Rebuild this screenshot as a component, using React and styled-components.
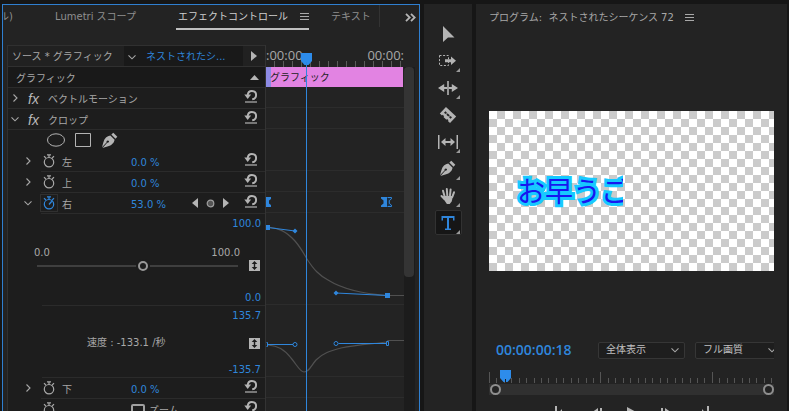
import React, { useState } from 'react';

import styled, { createGlobalStyle } from 'styled-components';

const GlobalStyle = createGlobalStyle`
  * {
    box-sizing: border-box;
  }

  body {
    margin: 0;
    background: #161616;
    color: #a8a8a8;
    font: 10px/14px 'DejaVu Sans', 'Noto Sans CJK JP', sans-serif;
    overflow: hidden;
  }

  button,
  select,
  input {
    margin: 0;
    font: inherit;
    color: inherit;
  }
`;

const Workspace = styled.main`
  display: grid;
  grid-template-columns: minmax(0, 418fr) 48px minmax(0, 311fr);
  gap: 4px;
  height: 100vh;
  padding: 4px 2px 0;
`;

const Panel = styled.section`
  min-width: 0;
  background: #232323;
  overflow: hidden;
`;

const FocusedPanel = styled(Panel)`
  display: flex;
  flex-direction: column;
  border: 1px solid #2f7fd0;
  border-bottom: 0;
`;

const IconButton = styled.button`
  display: flex;
  align-items: center;
  justify-content: center;
  padding: 0;
  border: 0;
  background: none;
  color: ${({ $color }) => $color || '#a8a8a8'};

  svg {
    display: block;
    flex: none;
  }
`;

/* ---- tabs ---- */

const Tabs = styled.nav`
  display: flex;
  flex: none;
  height: 40px;
  padding-right: 3px;
  white-space: nowrap;
`;

const Tab = styled.button`
  display: flex;
  align-items: center;
  flex: none;
  gap: 12px;
  height: 25px;
  padding: 0 0 0 2px;
  margin-right: ${({ $active }) => ($active ? '20px' : '40px')};
  border: 0;
  border-bottom: 2px solid ${({ $active }) => ($active ? '#c0c0c0' : 'transparent')};
  background: none;
  color: ${({ $active }) => ($active ? '#d0d0d0' : '#8f8f8f')};
`;

const ClippedTab = styled(Tab)`
  width: 10px;
  padding: 0;
  justify-content: flex-end;
  overflow: hidden;
`;

const TabDivider = styled.span`
  flex: none;
  width: 1px;
  height: 22px;
  margin-left: -32px;
  background: #333;
`;

const MoreTabs = styled(IconButton)`
  height: 25px;
  margin-left: auto;
`;

/* ---- effect controls ---- */

const EffectBody = styled.div`
  display: grid;
  grid-template-columns: minmax(0, 258fr) minmax(0, 139fr) 15px;
  flex: 1;
  min-height: 0;
  margin-left: 4px;
`;

const Properties = styled.div`
  border: 1px solid #303030;
  border-width: 1px 0 0 1px;
  background: #1d1d1d;
`;

const Row = styled.div`
  display: flex;
  align-items: center;
  height: 21px;
  margin-left: ${({ $indent }) => $indent || '0'};
  border-bottom: 1px solid ${({ $plain }) => ($plain ? 'transparent' : '#2b2b2b')};
  white-space: nowrap;
`;

const SourceRow = styled(Row)`
  background: #212121;
  border-color: #303030;
`;

const SourceName = styled.span`
  flex: 1;
  padding: 2px 0 0 4px;
`;

const SequencePicker = styled.button`
  display: flex;
  align-items: center;
  gap: 9px;
  width: 119px;
  height: 20px;
  padding: 2px 4px 0 3px;
  border: 0;
  background: #191919;
  color: #2f86dc;
`;

const RowEnd = styled(IconButton)`
  flex: none;
  width: ${({ $narrow }) => ($narrow ? '22px' : '28px')};
  height: 20px;
  padding-bottom: ${({ $raised }) => ($raised ? '4px' : '0')};
`;

const GroupRow = styled(Row)`
  padding-left: 8px;
  background: #191919;
`;

const Grow = styled.span`
  flex: 1;
  padding-top: 4px;
`;

const Twirl = styled(IconButton)`
  flex: none;
  width: 14px;
  height: 16px;
`;

const Fx = styled.span`
  flex: none;
  width: 26px;
  padding: 2px 0 0 6px;
  font: italic 14px/18px 'Liberation Sans', sans-serif;
  color: #b8b8b8;
`;

const Masks = styled(Row)`
  gap: 10px;
  padding-left: 39px;
`;

const Param = styled(Row)`
  padding-left: 13px;
  border-image: linear-gradient(90deg, transparent 34px, #2b2b2b 34px) 1;
`;

const Stopwatch = styled(IconButton)`
  flex: none;
  width: 16px;
  height: 16px;
  margin: 0 5px 0 6px;
  outline: ${({ $on }) => ($on ? '1px solid #303030' : 'none')};
`;

const ParamName = styled.span`
  flex: none;
  width: 69px;
  padding-top: 4px;
`;

const Value = styled.span`
  flex: 1;
  padding-top: 4px;
  color: #2f86dc;
`;

const KeyNav = styled.span`
  display: flex;
  align-items: center;
  gap: 8px;
  margin-right: 8px;
`;

const CheckLabel = styled.label`
  display: flex;
  align-items: center;
  flex: 1;
  gap: 4px;
  padding-top: 4px;

  input {
    appearance: none;
    width: 14px;
    height: 14px;
    border: 2px solid #a0a0a0;
    border-radius: 2px;
  }
`;

const GraphSection = styled.div`
  display: flex;
  height: ${({ $height }) => $height};
  margin-left: 34px;
  border-bottom: 1px solid #2b2b2b;
`;

const GraphMain = styled.div`
  flex: 1;
  min-width: 0;
  margin-left: -7px;
  padding: 0 1px 0 2px;
`;

const SliderLabels = styled.div`
  display: flex;
  justify-content: space-between;
  padding-top: 32px;
  margin: 0 -2px 0 -3px;
`;

const Slider = styled.input`
  appearance: none;
  display: block;
  width: 100%;
  height: 12px;
  background: linear-gradient(#3f3f3f, #3f3f3f) center / 100% 2px no-repeat;

  &::-webkit-slider-thumb {
    appearance: none;
    width: 10px;
    height: 10px;
    border: 2px solid #999;
    border-radius: 50%;
    background: #1d1d1d;
    box-shadow: 0 0 0 2px #1d1d1d;
  }
`;

const Speed = styled.p`
  margin: 30px 0 0 50px;
`;

const Bounds = styled.div`
  display: flex;
  flex-direction: column;
  align-items: flex-end;
  justify-content: space-between;
  width: 26px;
  padding: 3px 4px 0 0;
  color: #2f86dc;
  white-space: nowrap;
`;

const Fit = styled(IconButton)`
  margin: ${({ $top }) => $top || '0'} 1px 0 0;
`;

const Timeline = styled.div`
  position: relative;
  border-left: 1px solid #333;
`;

const TimeRuler = styled.div`
  display: flex;
  flex-direction: column;
  height: 22px;
  overflow: hidden;
`;

const TimeLabels = styled.div`
  display: flex;
  justify-content: space-between;
  height: 16px;
  font: 13px/20px 'Open Sans', sans-serif;
`;

const Ticks = styled.div`
  height: 6px;
  margin-left: 8px;
  background: repeating-linear-gradient(90deg, #5a5a5a 0 1px, transparent 1px 9px);
`;

const Clip = styled.div`
  height: 20px;
  padding-left: 4px;
  margin-right: 1px;
  background: linear-gradient(90deg, #8d8ae4 5px, #e283e2 5px);
  color: #222;
  line-height: 22px;
`;

const Lane = styled.div`
  height: ${({ $height }) => $height || '21px'};
  border-bottom: 1px solid ${({ $plain }) => ($plain ? 'transparent' : '#2c2c2c')};

  svg {
    display: block;
  }
`;

const Playhead = styled.div`
  position: absolute;
  top: 8px;
  bottom: 0;
  left: 35px;

  &::after {
    content: '';
    position: absolute;
    top: 9px;
    bottom: 0;
    left: 5px;
    width: 1px;
    background: #2f86dc;
  }

  svg {
    display: block;
  }
`;

const ScrollTrack = styled.div`
  width: 11px;
  margin-top: 22px;
  background: #1c1c1c;

  &::before {
    content: '';
    display: block;
    width: 10px;
    height: 210px;
    border-radius: 4px;
    background: #343434;
  }
`;

/* ---- tools ---- */

const ToolPanel = styled(Panel)`
  display: flex;
  flex-direction: column;
  align-items: center;
  gap: 2px;
  padding-top: 17px;
`;

const Tool = styled(IconButton)`
  position: relative;
  flex: none;
  width: 27px;
  height: 25px;
  border: 1px solid ${({ $active }) => ($active ? '#323232' : 'transparent')};
  border-radius: 2px;
  background: ${({ $active }) => ($active ? '#161616' : 'none')};

  &::after {
    content: '';
    display: ${({ $menu }) => ($menu ? 'block' : 'none')};
    position: absolute;
    right: 1px;
    bottom: 0;
    border: 2px solid #999;
    border-top-color: transparent;
    border-left-color: transparent;
  }
`;

/* ---- program monitor ---- */

const ProgramPanel = styled(Panel)`
  padding: 0 13px;
`;

const ProgramTitle = styled.header`
  display: flex;
  align-items: center;
  gap: 11px;
  height: 28px;
  white-space: pre;
`;

const Preview = styled.div`
  aspect-ratio: 16 / 9;
  margin-top: 79px;
  background: repeating-conic-gradient(#cbcbcb 0 25%, #fff 0 50%) 0 0 / 16px 16px;
`;

const CroppedTitle = styled.div`
  width: 47%;
  height: 100%;
  padding: 59px 0 0 28px;
  overflow: hidden;
  white-space: nowrap;
  font: 28px/40px 'Noto Sans CJK JP', sans-serif;
  color: #1717f0;
  -webkit-text-stroke: 6px #17c9ff;
  paint-order: stroke fill;
`;

const MonitorBar = styled.div`
  display: flex;
  align-items: center;
  margin-top: 70px;
  overflow: hidden;
`;

const Timecode = styled.span`
  flex: 1;
  padding-left: 7px;
  color: #2f86dc;
  font: 600 14px/18px 'Open Sans', sans-serif;
`;

const SelectBox = styled.label`
  position: relative;
  flex: none;
  width: 87px;
  margin-right: ${({ $last }) => ($last ? '-8px' : '10px')};

  select {
    appearance: none;
    display: block;
    width: 100%;
    height: 17px;
    padding: 0 7px;
    border: 1px solid #363636;
    border-radius: 2px;
    background: #1e1e1e;
    color: #c0c0c0;
    line-height: 14px;
  }

  svg {
    position: absolute;
    top: 4px;
    right: 5px;
    pointer-events: none;
  }
`;

const MonitorRuler = styled.div`
  position: relative;
  margin-top: 11px;
  overflow: hidden;

  svg {
    display: block;
  }
`;

const MonitorHead = styled.div`
  position: absolute;
  top: 0;
  left: 11px;
`;

const ZoomBar = styled.div`
  display: flex;
  justify-content: space-between;
  align-items: center;
  height: 11px;
  margin-top: 1px;
  padding-left: 1px;
  background: #303030;
`;

const ZoomHandle = styled.button`
  width: 11px;
  height: 11px;
  padding: 0;
  border: 2px solid #8f8f8f;
  border-radius: 50%;
  background: #232323;
`;

const Transport = styled.div`
  display: flex;
  justify-content: center;
  gap: 20px;
  margin-top: 11px;
`;

/* ---- icons ---- */

const Chevron = ({ down, color = '#a8a8a8' }) => (
  <svg width="10" height="8" viewBox="0 0 10 8" fill="none" stroke={color}>
    <path d={down ? 'M1.5 2.3 5 5.8 8.5 2.3' : 'M3.5.5 7 4 3.5 7.5'} strokeWidth="1.1" />
  </svg>
);

const MenuIcon = () => (
  <svg width="9" height="8" viewBox="0 0 9 8" fill="#a8a8a8">
    <path d="M0 0h9v1H0zM0 3h9v1H0zM0 6h9v1H0z" />
  </svg>
);

const ResetIcon = () => (
  <svg width="14" height="13" viewBox="0 0 14 13" fill="none" stroke="#b4b4b4">
    <path d="M3.700 5.500C3.800 2.700 5.600 1 7.900 1c2.500 0 4.200 1.700 4.200 4.100 0 2.300-1.500 3.900-3.900 4.200" strokeWidth="1.900" />
    <path d="M.3 4.500h6.800L3.700 9z" fill="#b4b4b4" stroke="none" />
    <path d="M1 12h12" strokeWidth="1.200" />
  </svg>
);

const StopwatchIcon = ({ on }) => (
  <svg width="12" height="14" viewBox="0 0 12 14" fill="none" stroke="currentColor" strokeWidth="1.2">
    <circle cx="6" cy="8.200" r="4.700" />
    <path d="M4 .8h4M6 .8v2.700M1 2.200l1.800 1.800M11 2.200 9.200 4" />
    {on && <path d="M6 8.500 8.800 5.300" strokeWidth="1.400" />}
  </svg>
);

const PenIcon = () => (
  <svg width="17" height="17" viewBox="0 0 17 17" fill="#b4b4b4">
    <path d="M10.300 2.600 12.300.8l4 4-1.800 2z" />
    <path d="M9.300 3.500 13.600 7.800c-.5 3-2.800 5.700-7.200 6.700L1.500 16l4.700-5.300c1 .3 2-.4 1.800-1.400-.3-1-1.700-1.200-2.300-.2-.3.500-.2.900 0 1.200L1 15.300l1.400-5C3.400 6.300 6 4 9.300 3.500z" />
  </svg>
);

const FitIcon = () => (
  <svg width="11" height="11" viewBox="0 0 11 11">
    <path d="M0 0h11v11H0z" fill="#b4b4b4" />
    <path d="M5.500 1 8.300 4H6.200v3h2.100L5.500 10 2.700 7h2.100V4H2.700z" fill="#1d1d1d" />
  </svg>
);

const HeadIcon = () => (
  <svg width="11" height="12" viewBox="0 0 11 12">
    <path d="M0 0h11v8L7.500 12h-4L0 8z" fill="#2d8ceb" />
    <path d="M5 9h1v3H5z" fill="#1d1d1d" />
  </svg>
);

const Triangle = ({ d, width, height }) => (
  <svg width={width} height={height} viewBox={`0 0 ${width} ${height}`} fill="#b4b4b4">
    <path d={d} />
  </svg>
);

const ToolSvg = ({ children }) => (
  <svg width="22" height="20" viewBox="0 0 22 20" fill="#b4b4b4">
    {children}
  </svg>
);

const tools = [
  {
    name: '選択ツール',
    icon: <path d="M6 2v16l5-4.500h6.500z" />,
  },
  {
    name: 'トラックの前方選択ツール',
    menu: true,
    icon: (
      <>
        <rect x="2.500" y="4.500" width="9" height="10" fill="none" stroke="#b4b4b4" strokeDasharray="2 1.600" />
        <path d="M8 8.200h6V5.500l5 4.200-5 4.200v-2.700H8z" />
      </>
    ),
  },
  {
    name: 'リップルツール',
    menu: true,
    icon: (
      <>
        <path d="M10.200 3h1.600v14h-1.600z" />
        <path d="M1 10l6.200-4v3h3v2h-3v3zM21 10l-6.200-4v3h-3v2h3v3z" />
      </>
    ),
  },
  {
    name: 'レーザーツール',
    icon: (
      <g transform="rotate(43 11 10)">
        <path
          fillRule="evenodd"
          d="M4 5.500h14v9h-3v-1h-2v1H9v-1H7v1H4zM6.500 9v2h2v-1h1.200v1h2.600v-1h1.200v1h2V9h-2v.6h-1.200V9H9.700v.6H8.500V9z"
        />
      </g>
    ),
  },
  {
    name: 'スリップツール',
    menu: true,
    icon: (
      <>
        <path d="M1 3h1.500v14H1zM19.500 3H21v14h-1.500z" />
        <path d="M4 10l4.500-4v3h5V6l4.500 4-4.500 4v-3h-5v3z" />
      </>
    ),
  },
  {
    name: 'ペンツール',
    menu: true,
    icon: (
      <g transform="translate(2 1)">
        <path d="M10.300 2.600 12.300.8l4 4-1.800 2z" />
        <path d="M9.300 3.500 13.600 7.800c-.5 3-2.800 5.700-7.200 6.700L1.500 16l4.700-5.300c1 .3 2-.4 1.800-1.400-.3-1-1.700-1.200-2.300-.2-.3.500-.2.900 0 1.200L1 15.300l1.400-5C3.400 6.300 6 4 9.300 3.500z" />
      </g>
    ),
  },
  {
    name: '手のひらツール',
    menu: true,
    icon: (
      <g fill="none" stroke="#b4b4b4" strokeLinecap="round" strokeWidth="2">
        <path d="M7.500 10 6 4.800M10.300 9.500 9.800 3M13 9.500l.6-6M15.300 11l1.700-4.700M7.500 13 4.500 10" />
        <path d="M7 10h9l-1.300 5.500-2 2.500h-2.800l-2.400-3.500L4.800 11z" fill="#b4b4b4" stroke="none" />
      </g>
    ),
  },
  {
    name: '横書き文字ツール',
    menu: true,
    active: true,
    icon: <path d="M4.500 3h13v4.500H16V5h-4v10.500h2V17H8v-1.500h2V5H6v2.500H4.500z" fill="#2f86dc" />,
  },
];

const ticks = Array.from({ length: 60 }, (_, i) => i);

const SimpleParam = ({ name, value }) => (
  <Param>
    <Twirl aria-label={`${name}を展開`}>
      <Chevron />
    </Twirl>
    <Stopwatch aria-label={`${name}のアニメーション`}>
      <StopwatchIcon />
    </Stopwatch>
    <ParamName>{name}</ParamName>
    <Value>{value}</Value>
    <RowEnd $raised aria-label="リセット">
      <ResetIcon />
    </RowEnd>
  </Param>
);

const EffectProperties = () => {
  const [crop, setCrop] = useState(53);

  return (
    <Properties>
      <SourceRow>
        <SourceName>ソース * グラフィック</SourceName>
        <SequencePicker>
          <Chevron down />
          ネストされたシ...
        </SequencePicker>
        <RowEnd $narrow aria-label="タイムライン表示">
          <Triangle width={6} height={10} d="M0 0 6 5 0 10z" />
        </RowEnd>
      </SourceRow>
      <GroupRow>
        <Grow>グラフィック</Grow>
        <RowEnd $narrow aria-label="折りたたむ">
          <Triangle width={9} height={5} d="M4.500 0 9 5H0z" />
        </RowEnd>
      </GroupRow>
      <Row>
        <Twirl aria-label="ベクトルモーションを展開">
          <Chevron />
        </Twirl>
        <Fx>fx</Fx>
        <Grow>ベクトルモーション</Grow>
        <RowEnd $raised aria-label="リセット">
          <ResetIcon />
        </RowEnd>
      </Row>
      <Row>
        <Twirl aria-label="クロップを閉じる">
          <Chevron down />
        </Twirl>
        <Fx>fx</Fx>
        <Grow>クロップ</Grow>
        <RowEnd $raised aria-label="リセット">
          <ResetIcon />
        </RowEnd>
      </Row>
      <Masks $plain>
        <IconButton aria-label="楕円形マスク">
          <svg width="18" height="14" viewBox="0 0 18 14" fill="none" stroke="#b4b4b4">
            <ellipse cx="9" cy="7" rx="8.500" ry="6.200" />
          </svg>
        </IconButton>
        <IconButton aria-label="長方形マスク">
          <svg width="16" height="14" viewBox="0 0 16 14" fill="none" stroke="#b4b4b4">
            <path d="M.5.5h15v13H.5z" />
          </svg>
        </IconButton>
        <IconButton aria-label="ペンマスク">
          <PenIcon />
        </IconButton>
      </Masks>
      <SimpleParam name="左" value="0.0 %" />
      <SimpleParam name="上" value="0.0 %" />
      <Param>
        <Twirl aria-label="右を閉じる">
          <Chevron down />
        </Twirl>
        <Stopwatch $on $color="#2f86dc" aria-label="右のアニメーション">
          <StopwatchIcon on />
        </Stopwatch>
        <ParamName>右</ParamName>
        <Value>{crop}.0 %</Value>
        <KeyNav>
          <IconButton aria-label="前のキーフレーム">
            <Triangle width={6} height={10} d="M6 0 0 5l6 5z" />
          </IconButton>
          <IconButton aria-label="キーフレームの追加">
            <svg width="9" height="9" viewBox="0 0 9 9">
              <circle cx="4.500" cy="4.500" r="3.300" fill="#555" stroke="#a0a0a0" strokeWidth="1.200" />
            </svg>
          </IconButton>
          <IconButton aria-label="次のキーフレーム">
            <Triangle width={6} height={10} d="M0 0 6 5 0 10z" />
          </IconButton>
        </KeyNav>
        <RowEnd $raised aria-label="リセット">
          <ResetIcon />
        </RowEnd>
      </Param>
      <GraphSection $height="92px">
        <GraphMain>
          <SliderLabels>
            <span>0.0</span>
            <span>100.0</span>
          </SliderLabels>
          <Slider
            type="range"
            aria-label="右"
            min="0"
            max="100"
            value={crop}
            onChange={(e) => setCrop(Number(e.target.value))}
          />
        </GraphMain>
        <Bounds>
          <span>100.0</span>
          <Fit aria-label="高さを調整" $top="8px">
            <FitIcon />
          </Fit>
          <span>0.0</span>
        </Bounds>
      </GraphSection>
      <GraphSection $height="72px">
        <GraphMain>
          <Speed>速度 : -133.1 /秒</Speed>
        </GraphMain>
        <Bounds>
          <span>135.7</span>
          <Fit aria-label="高さを調整">
            <FitIcon />
          </Fit>
          <span>-135.7</span>
        </Bounds>
      </GraphSection>
      <SimpleParam name="下" value="0.0 %" />
      <Param>
        <Twirl as="span" />
        <Stopwatch aria-label="ズームのアニメーション">
          <StopwatchIcon />
        </Stopwatch>
        <ParamName />
        <CheckLabel>
          <input type="checkbox" />
          ズーム
        </CheckLabel>
        <RowEnd $raised aria-label="リセット">
          <ResetIcon />
        </RowEnd>
      </Param>
    </Properties>
  );
};

const EffectTimeline = () => (
  <Timeline>
    <TimeRuler>
      <TimeLabels>
        <span>:00:00</span>
        <span>00:00:</span>
      </TimeLabels>
      <Ticks />
    </TimeRuler>
    <Clip>グラフィック</Clip>
    <Lane />
    <Lane />
    <Lane $plain />
    <Lane />
    <Lane />
    <Lane>
      <svg width="138" height="20" viewBox="0 0 138 20" fill="#2f86dc">
        <path d="M0 5h5v2L3 8.500v3L5 13v2H0z" />
        <path d="M115 5h6v10h-6v-1.500l2.500-2v-3l-2.500-2z" />
        <path d="M121.500 5.500h4v1.300l-2.200 1.800v2.800l2.200 1.800v1.300h-4" fill="#16324e" stroke="#2f86dc" />
      </svg>
    </Lane>
    <Lane $height="92px">
      <svg width="138" height="91" viewBox="0 0 138 91" fill="none">
        <path
          d="M2 14C12 15 20 18 29 28C35 35 38 41 41 46C48 57 53 62 62 67C78 77 100 81 121 82.500H138"
          stroke="#505050"
          strokeWidth="1.200"
        />
        <path d="M2 14.500 29 18M70 80 121 82.500" stroke="#2f86dc" />
        <path d="M0 12h4v5H0zM119 80h5v5h-5zM29 15.500l2.500 2.500L29 20.500l-2.500-2.500zM70 77.500l2.500 2.500-2.500 2.500-2.500-2.500z" fill="#2f86dc" />
      </svg>
    </Lane>
    <Lane $height="72px">
      <svg width="138" height="71" viewBox="0 0 138 71" fill="none">
        <path
          d="M2 40C12 41 18 44 25 53C31 60 34 67 38 67C43 67 45 61 50 55C57 48 64 46 75 43C90 40 105 39 121 37L122 35.500H138"
          stroke="#505050"
          strokeWidth="1.200"
        />
        <path d="M2 39.500H27M72.500 38.500H120M.5 37.500h1v4h-1M120.500 36.500h2v4h-2z" stroke="#2f86dc" />
        <circle cx="29" cy="39.500" r="2" fill="#1d1d1d" stroke="#2f86dc" />
        <circle cx="70" cy="38.500" r="2" fill="#1d1d1d" stroke="#2f86dc" />
      </svg>
    </Lane>
    <Lane />
    <Playhead>
      <HeadIcon />
    </Playhead>
  </Timeline>
);

const EffectControls = () => (
  <FocusedPanel>
    <Tabs>
      <ClippedTab>ル)</ClippedTab>
      <Tab>Lumetri スコープ</Tab>
      <Tab $active>
        エフェクトコントロール
        <MenuIcon />
      </Tab>
      <Tab>テキスト</Tab>
      <TabDivider />
      <MoreTabs aria-label="その他のパネル">
        <svg width="11" height="9" viewBox="0 0 11 9" fill="none" stroke="#b4b4b4" strokeWidth="1.800">
          <path d="M1 .8 4.700 4.500 1 8.200M6 .8l3.700 3.700L6 8.200" />
        </svg>
      </MoreTabs>
    </Tabs>
    <EffectBody>
      <EffectProperties />
      <EffectTimeline />
      <ScrollTrack />
    </EffectBody>
  </FocusedPanel>
);

const ProgramMonitor = () => (
  <ProgramPanel>
    <ProgramTitle>
      <span>プログラム:  ネストされたシーケンス 72</span>
      <MenuIcon />
    </ProgramTitle>
    <Preview>
      <CroppedTitle>お早うご</CroppedTitle>
    </Preview>
    <MonitorBar>
      <Timecode>00:00:00:18</Timecode>
      <SelectBox>
        <select aria-label="ズームレベル">
          <option>全体表示</option>
        </select>
        <Chevron down />
      </SelectBox>
      <SelectBox $last>
        <select aria-label="再生時の解像度">
          <option>フル画質</option>
        </select>
        <Chevron down />
      </SelectBox>
    </MonitorBar>
    <MonitorRuler>
      <svg width="450" height="13" viewBox="0 0 450 13" fill="#555">
        {ticks.map((i) => (
          <rect key={i} x={Math.round(i * 7.43)} y={i % 15 ? 8 : 2} width="1" height={i % 15 ? 5 : 11} />
        ))}
      </svg>
      <MonitorHead>
        <HeadIcon />
      </MonitorHead>
    </MonitorRuler>
    <ZoomBar>
      <ZoomHandle aria-label="表示開始" />
      <ZoomHandle aria-label="表示終了" />
    </ZoomBar>
    <Transport>
      <IconButton aria-label="インへ移動">
        <Triangle width={16} height={14} d="M0 0h2v14H0zM7 3v3h7v3H7v3L3 7.500z" />
      </IconButton>
      <IconButton aria-label="1 フレーム前へ戻る">
        <Triangle width={14} height={14} d="M7 2v10L0 7zM9 2h2v10H9z" />
      </IconButton>
      <IconButton aria-label="再生">
        <Triangle width={14} height={14} d="M2 1 13 7 2 13z" />
      </IconButton>
      <IconButton aria-label="1 フレーム先へ進む">
        <Triangle width={14} height={14} d="M2 2h2v10H2zM6 2l7 5-7 5z" />
      </IconButton>
      <IconButton aria-label="アウトへ移動">
        <Triangle width={16} height={14} d="M14 0h2v14h-2zM9 3v3H2v3h7v3l4-4.500z" />
      </IconButton>
    </Transport>
  </ProgramPanel>
);

const App = () => (
  <>
    <GlobalStyle />
    <Workspace>
      <EffectControls />
      <ToolPanel as="aside">
        {tools.map(({ name, icon, menu, active }) => (
          <Tool key={name} aria-label={name} $menu={menu} $active={active}>
            <ToolSvg>{icon}</ToolSvg>
          </Tool>
        ))}
      </ToolPanel>
      <ProgramMonitor />
    </Workspace>
  </>
);

export default App;
